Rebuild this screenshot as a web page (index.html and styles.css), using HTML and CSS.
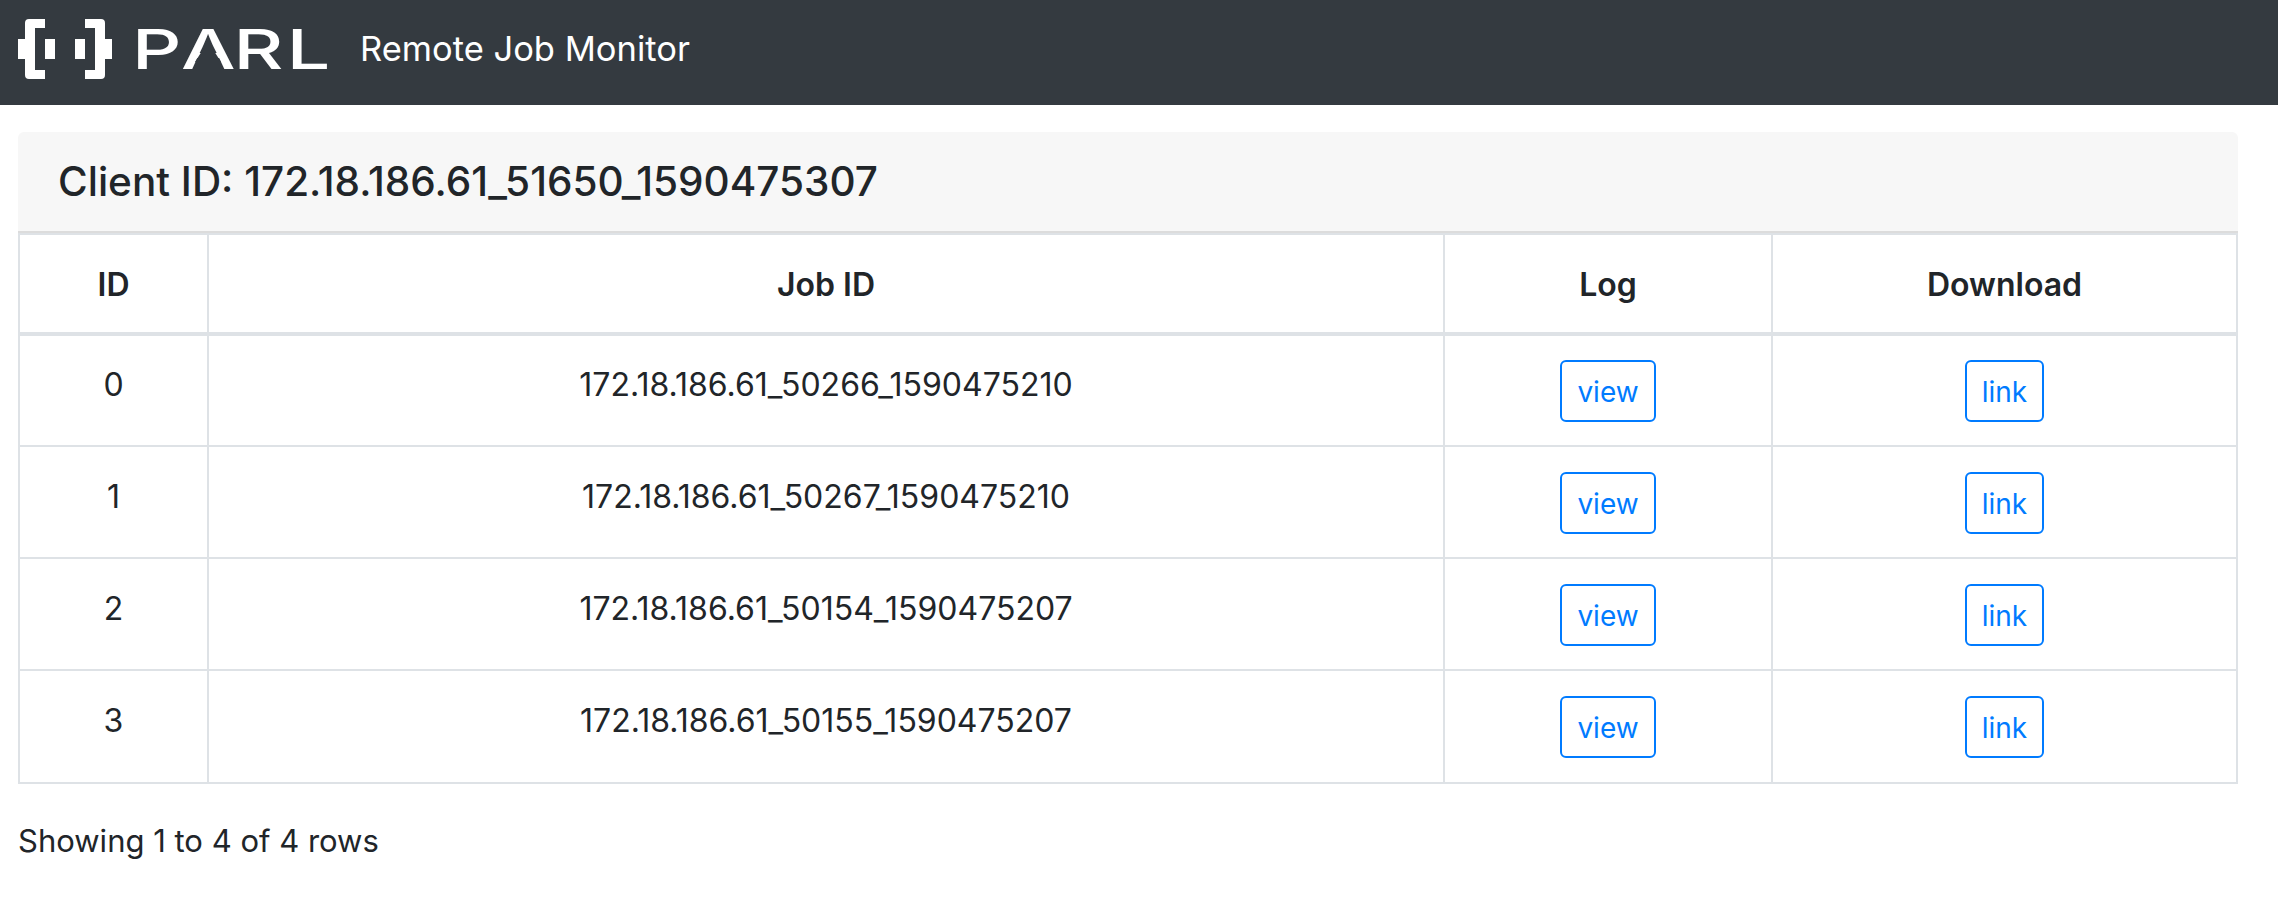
FILE: index.html
```html
<!DOCTYPE html>
<html lang="en">
<head>
    <meta charset="UTF-8">
    <meta name="viewport" content="width=device-width, initial-scale=1.0">
    <title>Remote Job Monitor</title>
    <link rel="stylesheet" href="styles.css">
</head>
<body>
    <nav class="navbar">
        <svg class="logo" viewBox="0 -10 322 80" width="322" height="80">
            <path class="logo-mark" d="M11 0h16v9H17v42h10v9H11q-4 0-4-4V40H0V20h7V4q0-4 4-4z"/>
            <rect class="logo-mark" x="27" y="20" width="10" height="20"/>
            <rect class="logo-mark" x="57" y="20" width="10" height="20"/>
            <path class="logo-mark" d="M83 0H67v9h10v42H67v9h16q4 0 4-4V40h7V20h-7V4q0-4-4-4z"/>
            <text class="logo-text" transform="scale(1.4 1)" x="81.4 116.5 154 192" y="50">PARL</text>
            <!-- the A in the logo has no crossbar -->
            <polygon class="logo-gap" points="184,32 196,32 203,43 177,43"/>
        </svg>
        <span class="navbar-title">Remote Job Monitor</span>
    </nav>

    <div class="container">
        <div class="card">
            <h4 class="card-header">Client ID: 172.18.186.61_51650_1590475307</h4>
            <table class="job-table">
                <colgroup>
                    <col class="col-id">
                    <col class="col-job">
                    <col class="col-log">
                    <col class="col-download">
                </colgroup>
                <thead>
                    <tr>
                        <th>ID</th>
                        <th>Job ID</th>
                        <th>Log</th>
                        <th>Download</th>
                    </tr>
                </thead>
                <tbody>
                    <tr>
                        <td>0</td>
                        <td>172.18.186.61_50266_1590475210</td>
                        <td class="action"><a class="btn" href="#">view</a></td>
                        <td class="action"><a class="btn" href="#">link</a></td>
                    </tr>
                    <tr>
                        <td>1</td>
                        <td>172.18.186.61_50267_1590475210</td>
                        <td class="action"><a class="btn" href="#">view</a></td>
                        <td class="action"><a class="btn" href="#">link</a></td>
                    </tr>
                    <tr>
                        <td>2</td>
                        <td>172.18.186.61_50154_1590475207</td>
                        <td class="action"><a class="btn" href="#">view</a></td>
                        <td class="action"><a class="btn" href="#">link</a></td>
                    </tr>
                    <tr>
                        <td>3</td>
                        <td>172.18.186.61_50155_1590475207</td>
                        <td class="action"><a class="btn" href="#">view</a></td>
                        <td class="action"><a class="btn" href="#">link</a></td>
                    </tr>
                </tbody>
            </table>
        </div>
        <p class="pagination-info">Showing 1 to 4 of 4 rows</p>
    </div>
</body>
</html>
```

FILE: styles.css
```css
* {
    box-sizing: border-box;
    margin: 0;
    padding: 0;
}

body {
    background-color: #fff;
    color: #212529;
    font-family: Inter, "Noto Sans", sans-serif;
    font-size: 32px;
    line-height: 48px;
}

.navbar {
    display: flex;
    align-items: center;
    height: 105px;
    padding-left: 18px;
    background-color: #343a40;
    color: #fff;
}

.logo {
    display: block;
    margin-right: 20px;
    margin-bottom: 7px;
}

.logo-mark {
    fill: #fff;
}

.logo-gap {
    fill: #343a40;
}

.logo-text {
    fill: #fff;
    font-family: Inter, sans-serif;
    font-size: 55px;
    font-weight: 500;
}

.navbar-title {
    margin-bottom: 7px;
    font-size: 34.5px;
}

.container {
    padding: 27px 40px 0 18px;
}

.card {
    border-radius: 6px 6px 0 0;
    overflow: hidden;
}

.card-header {
    height: 101px;
    padding: 26px 40px 0 40px;
    background-color: #f7f7f7;
    border-bottom: 2px solid #dcdcdc;
    font-size: 40.5px;
    font-weight: 500;
    line-height: 48px;
}

.job-table {
    width: 100%;
    border-collapse: collapse;
    table-layout: fixed;
    text-align: center;
}

.col-id { width: 189px; }
.col-job { width: 1236px; }
.col-log { width: 328px; }

.job-table th,
.job-table td {
    border: 2px solid #dee2e6;
}

.job-table th {
    height: 100px;
    border-bottom-width: 4px;
    padding-top: 2px;
    font-weight: 600;
    vertical-align: middle;
}

.job-table td {
    height: 112px;
    padding-top: 25px;
    vertical-align: top;
}

.job-table td.action {
    padding-top: 24px;
    line-height: 0;
}

.job-table tbody tr:nth-child(n+2) td {
    padding-top: 26px;
}

.job-table tbody tr:nth-child(n+2) td.action {
    padding-top: 25px;
}

.job-table tbody tr:last-child td {
    height: 113px;
}

.btn {
    display: inline-block;
    height: 62px;
    padding: 0 15px;
    border: 2px solid #007bff;
    border-radius: 6px;
    color: #007bff;
    font-size: 28px;
    line-height: 60px;
    text-decoration: none;
}

.pagination-info {
    margin-top: 33px;
    font-size: 31px;
}
```
